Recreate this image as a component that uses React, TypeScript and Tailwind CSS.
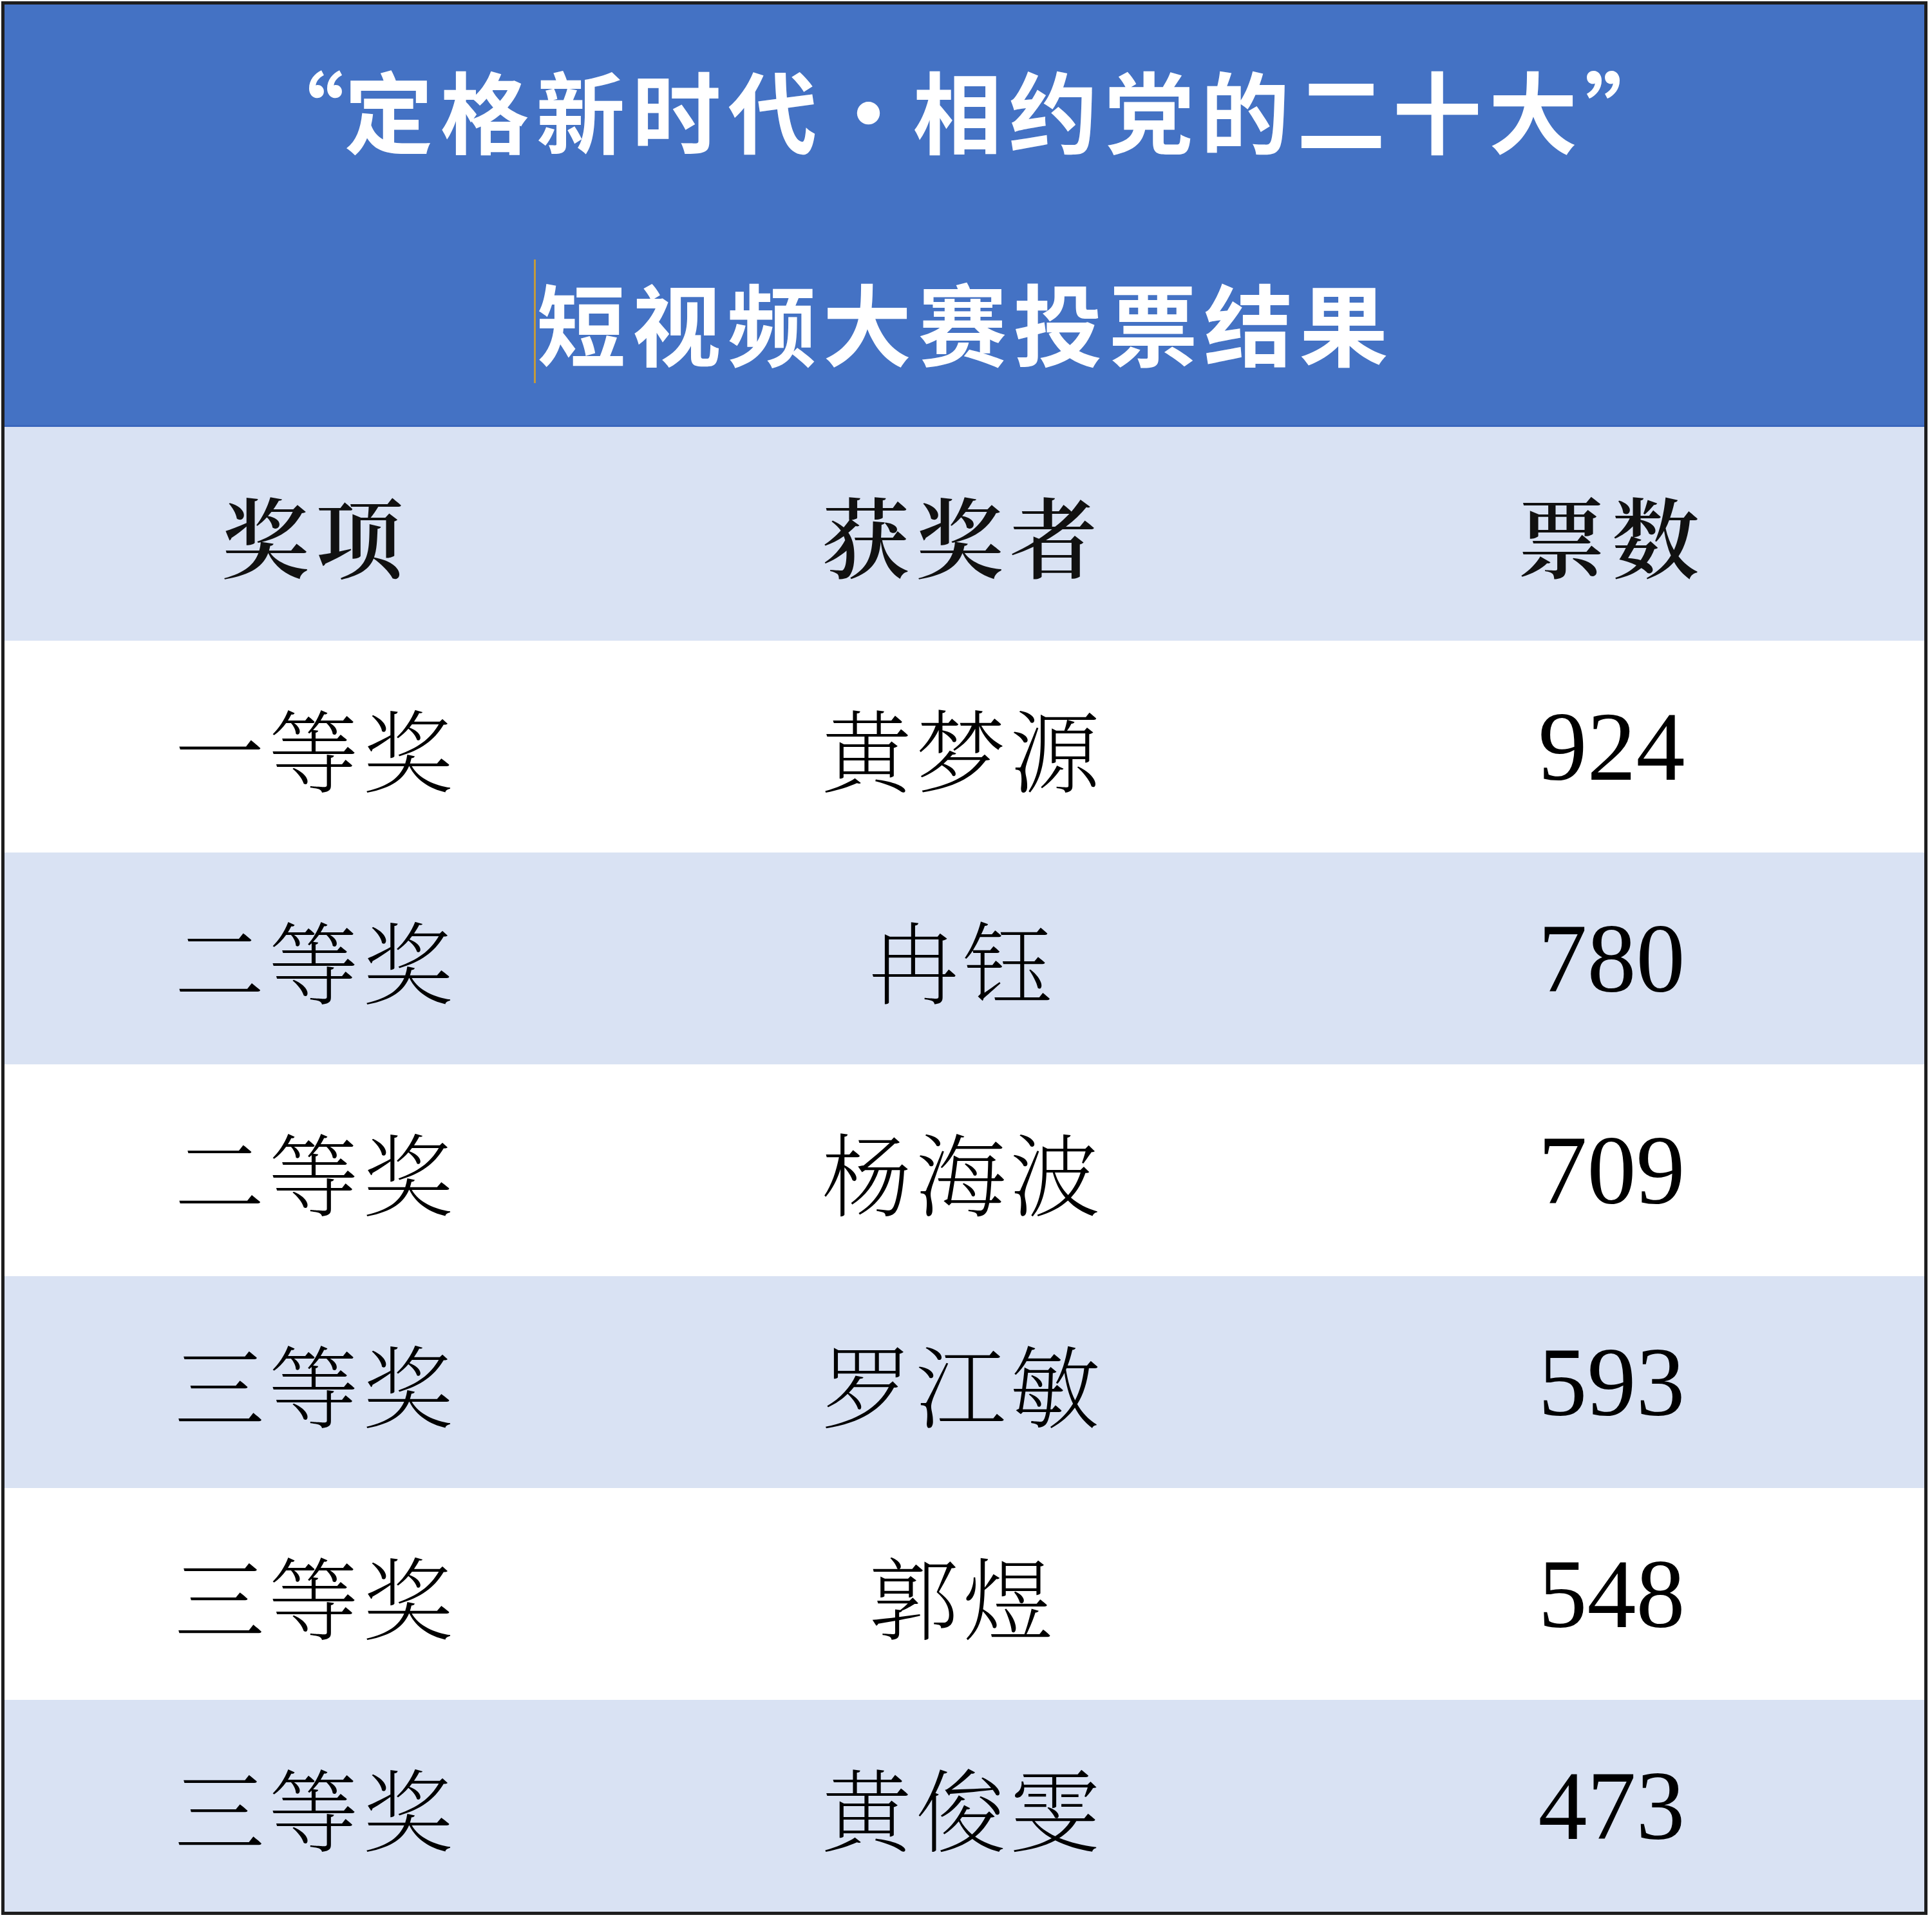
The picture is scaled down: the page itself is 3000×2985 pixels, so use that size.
import React from 'react';

interface ResultRow {
  award: string;
  name: string;
  votes: number;
}

const results: ResultRow[] = [
  { award: '一等奖', name: '黄梦源', votes: 924 },
  { award: '二等奖', name: '冉钰', votes: 780 },
  { award: '二等奖', name: '杨海波', votes: 709 },
  { award: '三等奖', name: '罗江敏', votes: 593 },
  { award: '三等奖', name: '郭煜', votes: 548 },
  { award: '三等奖', name: '黄俊雯', votes: 473 },
];

export default function App() {
  return (
    <div lang="zh-CN" className="w-[3000px] h-[2985px] bg-white pt-[2px] pl-[2px]">
      <div className="w-[2991px] border-[5px] border-[#1e1e1e] flex flex-col">
        {/* title block */}
        <div className="h-[656px] bg-[#4472c4] border-b-[3px] border-[#3b67bd] text-white font-bold flex flex-col font-['Noto_Sans_CJK_SC',sans-serif] text-[138px]">
          <div className="h-[322px] flex items-center justify-center tracking-[11px]">
            <span className="inline-block w-[1em] text-right">“</span>
            <span>定格新时代</span>
            <span className="inline-block w-[1em] text-center">·</span>
            <span>相约党的二十大</span>
            <span className="inline-block w-[1em] text-left">”</span>
          </div>
          <div className="h-[331px] pt-[8px] flex items-center justify-center">
            <span className="w-[3px] h-[192px] bg-[#c39a3c] mr-[1px]" />
            <span className="tracking-[10px]">短视频大赛投票结果</span>
          </div>
        </div>

        {/* column header */}
        <div className="h-[332px] bg-[#d9e2f3] grid grid-cols-[966px_1044px_1fr] items-center text-[#111] font-semibold text-[136px] font-['Noto_Serif_CJK_SC','Noto_Sans_CJK_SC',serif]">
          <div className="text-center tracking-[10px]">奖项</div>
          <div className="text-center tracking-[10px]">获奖者</div>
          <div className="text-center tracking-[10px]">票数</div>
        </div>

        {/* result rows */}
        {results.map((r, i) => (
          <div
            key={i}
            className={`h-[329px] grid grid-cols-[966px_1044px_1fr] items-center text-black ${i % 2 === 1 ? 'bg-[#d9e2f3]' : 'bg-white'}`}
          >
            <div className="text-center text-[140px] tracking-[6px] font-extralight font-['Noto_Serif_CJK_SC','Noto_Sans_CJK_SC',serif]">{r.award}</div>
            <div className="text-center text-[140px] tracking-[6px] font-extralight font-['Noto_Serif_CJK_SC','Noto_Sans_CJK_SC',serif]">{r.name}</div>
            <div className="text-center text-[152px] font-['Liberation_Serif',serif]">{r.votes}</div>
          </div>
        ))}
      </div>
    </div>
  );
}
